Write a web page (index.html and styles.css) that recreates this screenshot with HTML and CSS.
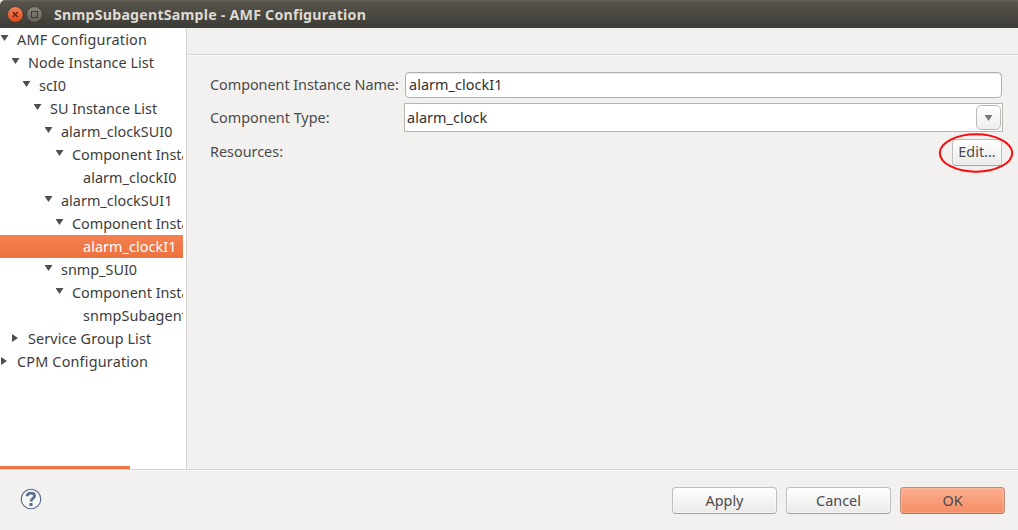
FILE: index.html
```html
<!DOCTYPE html>
<html lang="en">
<head>
<meta charset="utf-8">
<title>SnmpSubagentSample - AMF Configuration</title>
<link rel="stylesheet" href="styles.css">
</head>
<body>
<div class="window">
  <header class="titlebar">
    <svg class="controls" width="38" height="18" viewBox="0 0 38 18">
      <defs>
        <linearGradient id="close" x1="0" y1="0" x2="0" y2="1"><stop offset="0" stop-color="#f58259"/><stop offset="1" stop-color="#dd4a1b"/></linearGradient>
        <linearGradient id="max" x1="0" y1="0" x2="0" y2="1"><stop offset="0" stop-color="#8b877f"/><stop offset="1" stop-color="#65625b"/></linearGradient>
      </defs>
      <circle cx="9.3" cy="8.5" r="7.9" fill="url(#close)" stroke="#38352f" stroke-width=".8"/>
      <path d="M6.8 6l5 5M11.8 6l-5 5" stroke="#4b2416" stroke-width="1.2"/>
      <circle cx="28.5" cy="8.5" r="7.9" fill="url(#max)" stroke="#38352f" stroke-width=".8"/>
      <rect x="25.5" y="5.5" width="6" height="6" fill="none" stroke="#3a3833"/>
    </svg>
    <h1 class="title">SnmpSubagentSample - AMF Configuration</h1>
  </header>
  <main class="content">
    <aside class="sidebar">
      <ul class="tree">
        <li class="row l0"><i class="arrow open"></i><span class="conf">AMF Configuration</span></li>
        <li class="row l1"><i class="arrow open"></i><span class="node">Node Instance List</span></li>
        <li class="row l2"><i class="arrow open"></i><span>scI0</span></li>
        <li class="row l3"><i class="arrow open"></i><span>SU Instance List</span></li>
        <li class="row l4"><i class="arrow open"></i><span class="sui">alarm_clockSUI0</span></li>
        <li class="row l5"><i class="arrow open"></i><span>Component Instance List</span></li>
        <li class="row l6"><i class="arrow"></i><span class="clock">alarm_clockI0</span></li>
        <li class="row l4"><i class="arrow open"></i><span class="sui">alarm_clockSUI1</span></li>
        <li class="row l5"><i class="arrow open"></i><span>Component Instance List</span></li>
        <li class="row l6 selected"><i class="arrow"></i><span class="clock">alarm_clockI1</span></li>
        <li class="row l4"><i class="arrow open"></i><span>snmp_SUI0</span></li>
        <li class="row l5"><i class="arrow open"></i><span>Component Instance List</span></li>
        <li class="row l6"><i class="arrow"></i><span class="agent">snmpSubagentI0</span></li>
        <li class="row l1"><i class="arrow closed"></i><span class="sgl">Service Group List</span></li>
        <li class="row l0"><i class="arrow closed"></i><span class="conf">CPM Configuration</span></li>
      </ul>
      <div class="scrollbar"></div>
    </aside>
    <section class="pane">
      <div class="pane-header"></div>
      <form class="form">
        <div class="field name-field"><label class="label-name">Component Instance Name:</label><div class="input"><span class="clock">alarm_clockI1</span></div></div>
        <div class="field type-field"><label>Component Type:</label><div class="combo"><span class="clock">alarm_clock</span><span class="drop"><i class="caret"></i></span></div></div>
        <div class="field res-field"><label>Resources:</label><div class="edit-wrap"><button type="button" class="button edit">Edit...</button>
          <svg class="ring" width="76" height="42" viewBox="0 0 76 42"><ellipse cx="38" cy="21" rx="36.2" ry="18.7" fill="none" stroke="#fa0a0a" stroke-width="2"/></svg></div></div>
      </form>
    </section>
  </main>
  <footer class="footer">
    <svg class="help" width="22" height="22" viewBox="0 0 22 22">
      <circle cx="11" cy="11" r="9.8" fill="#f7f7f6" stroke="#52678a" stroke-width="1.1"/>
      <path d="M7.2 8.3C7.2 5.9 8.7 5.2 11 5.2S14.5 6.2 14.5 8C14.5 10.3 11 10.4 11 13.4" fill="none" stroke="#5b6f91" stroke-width="2.8"/>
      <rect x="9.3" y="15" width="3.3" height="3" rx=".7" fill="#5b6f91"/>
    </svg>
    <div class="actions">
      <button type="button" class="button">Apply</button>
      <button type="button" class="button">Cancel</button>
      <button type="button" class="button ok">OK</button>
    </div>
  </footer>
</div>
</body>
</html>
```
FILE: styles.css
```css
* { box-sizing: border-box; }
body { margin: 0; background: #f2f1f0; color: #3c3c3c; font: 14.4px/20px "Noto Sans", "Open Sans", sans-serif; }
.window { width: 1018px; height: 530px; display: flex; flex-direction: column; overflow: hidden; }
.titlebar { height: 28px; flex: none; display: flex; align-items: center; gap: 9px; padding: 1px 0 0 6px; background: linear-gradient(#66635a 0, #57544c 2px, #3d3b36 100%); border-radius: 5px 0 0; }
.controls { flex: none; margin-right: 1px; }
.title { margin: 0; font-size: 14.2px; line-height: 20px; font-weight: 700; letter-spacing: .22px; color: #dfdbd2; white-space: nowrap; }
.content { flex: 1; display: flex; min-height: 0; }
.sidebar { width: 187px; flex: none; display: flex; flex-direction: column; justify-content: space-between; background: #fff; border-right: 1px solid #d3d2d0; }
.tree { width: 183px; margin: 0; padding: 0; list-style: none; overflow: hidden; }
.row { height: 23px; display: flex; white-space: nowrap; line-height: 23px; }
.l1 { padding-left: 11px; }
.l2 { padding-left: 22px; }
.l3 { padding-left: 33px; }
.l4 { padding-left: 44px; }
.l5 { padding-left: 55px; }
.l6 { padding-left: 66px; }
.conf { letter-spacing: .19px; }
.node { letter-spacing: .04px; }
.sgl { letter-spacing: .1px; }
.sui { letter-spacing: .02px; }
.clock { letter-spacing: .07px; }
.agent { letter-spacing: .1px; }
.arrow { width: 17px; height: 8px; flex: none; margin-top: 7px; }
.arrow::before { content: ""; display: block; }
.open::before { width: 8px; height: 6px; margin-left: .5px; background: #4f4f4f; clip-path: polygon(0 0, 100% 0, 50% 100%); }
.closed::before { width: 6px; height: 8px; margin-left: 1px; background: #4f4f4f; clip-path: polygon(0 0, 100% 50%, 0 100%); }
.selected { color: #fff; background: linear-gradient(#f58050, #ec713f); }
.scrollbar { width: 130px; height: 3px; background: #ed7442; }
.pane { flex: 1; display: flex; flex-direction: column; }
.pane-header { height: 27px; border-bottom: 1px solid #d8d7d5; box-shadow: 0 1px #faf9f9; }
.form { display: flex; flex-direction: column; padding: 17px 16px 0 23px; color: #4a4a4a; }
.field { display: flex; align-items: center; }
.field > label { width: 194px; flex: none; white-space: nowrap; }
.field > .label-name { letter-spacing: -.04px; }
.name-field { height: 26px; }
.type-field { height: 29px; margin-top: 5px; margin-right: -1px; }
.res-field { height: 28px; margin-top: 6px; justify-content: space-between; }
.input { flex: 1; height: 26px; margin-left: 1px; padding: 2px 3px; background: #fff; border: 1px solid #b0aeaa; border-radius: 4px; box-shadow: inset 0 1px #ecebea; color: #303030; }
.combo { flex: 1; height: 29px; display: flex; align-items: center; justify-content: space-between; padding: 0 1px 0 2px; background: #fff; border: 1px solid #b9b6b0; color: #303030; }
.drop { width: 25px; height: 25px; display: flex; align-items: center; justify-content: center; border: 1px solid #bbb9b6; border-radius: 5px; background: linear-gradient(#fff, #efeeed); }
.caret { width: 8px; height: 6px; margin-top: 1px; background: #777; clip-path: polygon(0 0, 100% 0, 50% 100%); }
.button { height: 27px; display: flex; align-items: center; justify-content: center; padding: 0; font: inherit; color: #4a4a4a; border: 1px solid #c0bebb; border-bottom-color: #a3a19e; border-radius: 4px; background: linear-gradient(#fff, #ebeae9); box-shadow: inset 0 0 0 1px rgba(255,255,255,.5); }
.edit-wrap { position: relative; }
.edit { width: 50px; }
.ring { position: absolute; left: -14px; top: -7px; }
.footer { height: 61px; flex: none; display: flex; align-items: center; justify-content: space-between; padding: 0 13px 0 20px; border-top: 1px solid #d3d2d0; box-shadow: inset 0 1px #faf9f9; }
.help { margin-bottom: 2px; }
.actions { display: flex; gap: 9px; margin-top: 1px; }
.actions .button { width: 105px; }
.actions .ok { background: linear-gradient(#fcae90, #f58e66); border-color: #ba8d7c; border-bottom-color: #a47562; box-shadow: inset 0 0 0 1px rgba(255,190,160,.6); }
```
